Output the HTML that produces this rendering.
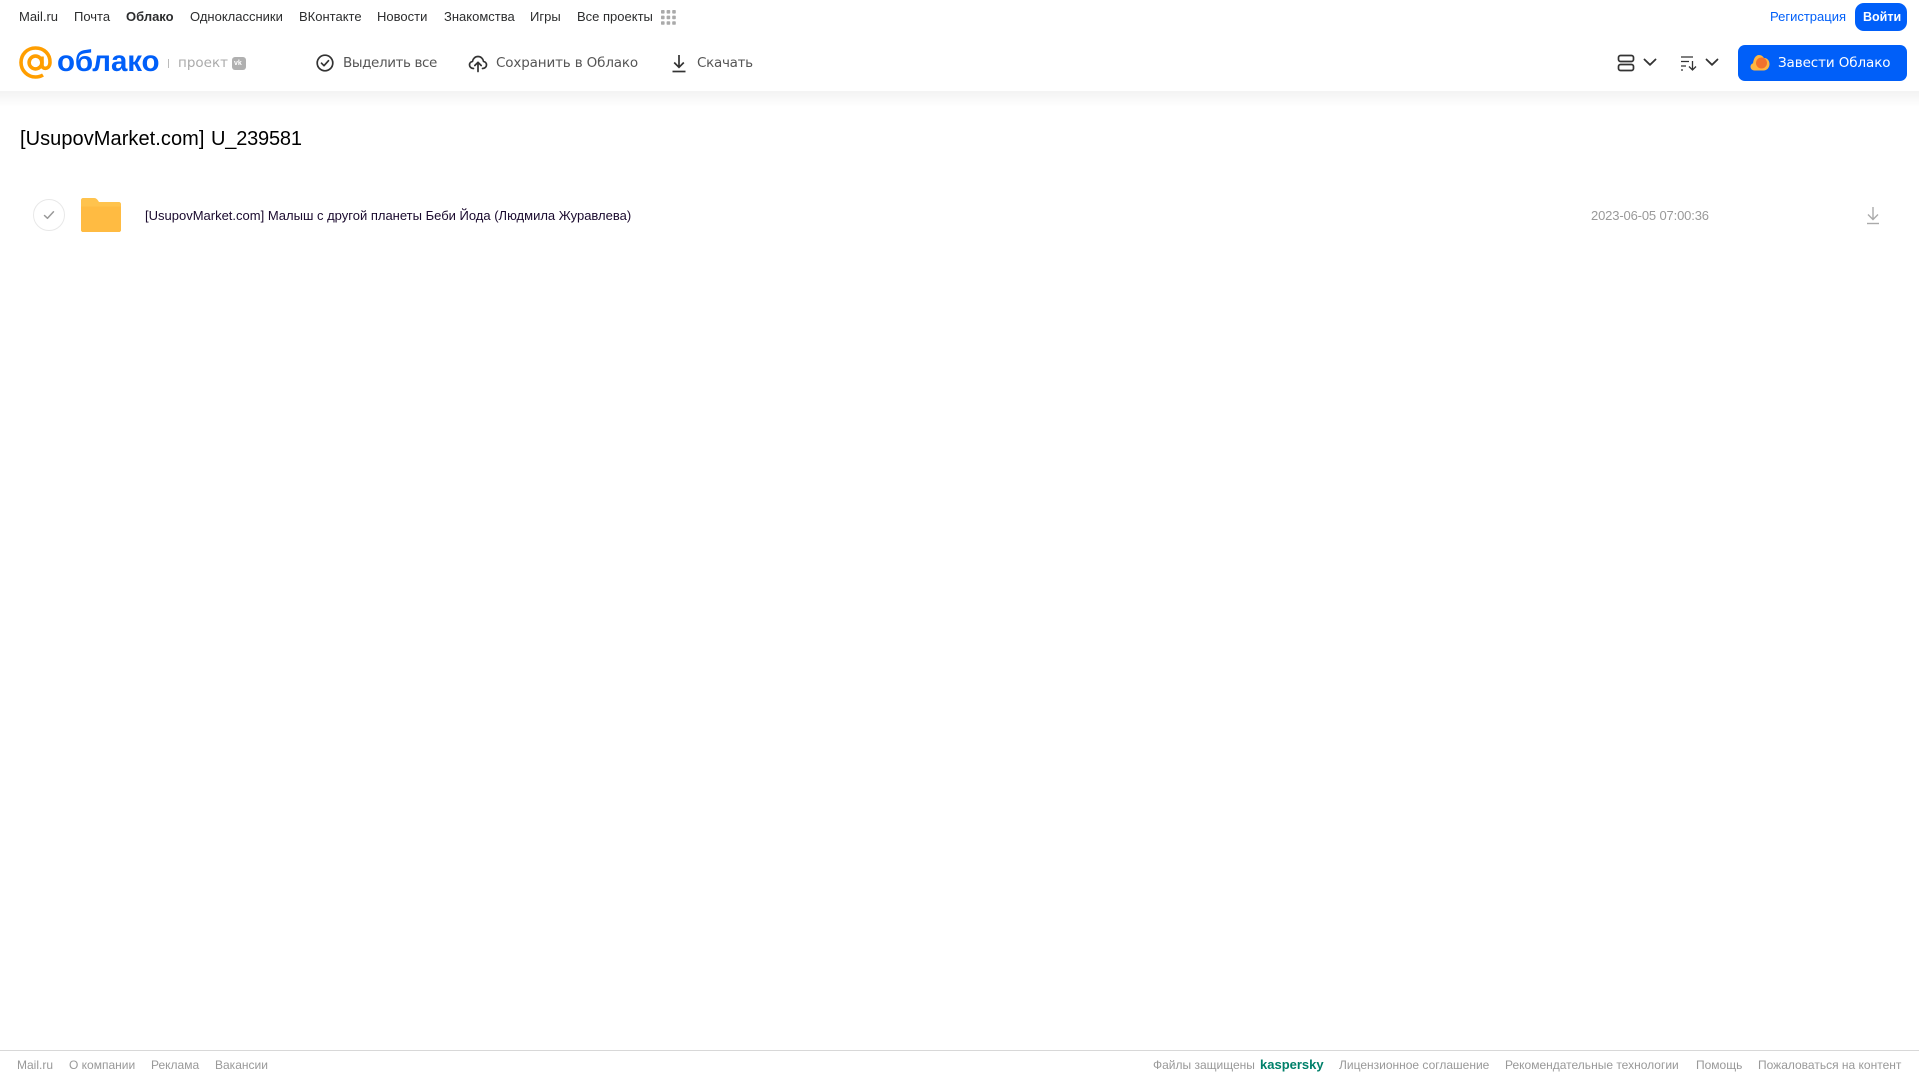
<!DOCTYPE html>
<html lang="ru">
<head>
<meta charset="utf-8">
<title>Облако</title>
<style>
html,body{margin:0;padding:0;background:#fff}
body{width:1919px;height:1079px;position:relative;overflow:hidden;font-family:"Liberation Sans",sans-serif}
.t{position:absolute;white-space:nowrap;line-height:20px}
.n{top:7px;font-size:13px;color:#2c2d2e}
.m{top:53px;color:#555;font-family:"DejaVu Sans",sans-serif;font-size:13.5px}
.f{top:1055px;font-size:12px;color:#999}
svg{position:absolute;display:block}
</style>
</head>
<body>
<div style="position:absolute;left:0;top:91px;width:1919px;height:16px;background:linear-gradient(#f3f3f3,#fff)"></div>
<div style="position:absolute;left:0;top:0;width:1919px;height:91px;background:#fff"></div>

<span class="t n" style="left:19px">Mail.ru</span>
<span class="t n" style="left:74px">Почта</span>
<span class="t n" style="left:126px;font-weight:bold">Облако</span>
<span class="t n" style="left:190px">Одноклассники</span>
<span class="t n" style="left:299px">ВКонтакте</span>
<span class="t n" style="left:377px">Новости</span>
<span class="t n" style="left:444px">Знакомства</span>
<span class="t n" style="left:530px">Игры</span>
<span class="t n" style="left:577px">Все проекты</span>
<svg style="left:661px;top:10px" width="15" height="15" viewBox="0 0 15 15" fill="#aaa">
<rect x="0" y="0" width="3.6" height="3.6" rx=".8"/><rect x="5.6" y="0" width="3.6" height="3.6" rx=".8"/><rect x="11.2" y="0" width="3.6" height="3.6" rx=".8"/>
<rect x="0" y="5.6" width="3.6" height="3.6" rx=".8"/><rect x="5.6" y="5.6" width="3.6" height="3.6" rx=".8"/><rect x="11.2" y="5.6" width="3.6" height="3.6" rx=".8"/>
<rect x="0" y="11.2" width="3.6" height="3.6" rx=".8"/><rect x="5.6" y="11.2" width="3.6" height="3.6" rx=".8"/><rect x="11.2" y="11.2" width="3.6" height="3.6" rx=".8"/>
</svg>

<span class="t" style="left:1770px;top:7px;font-size:13px;color:#005ff9">Регистрация</span>
<div style="position:absolute;left:1855px;top:3px;width:52px;height:28px;border-radius:9px;background:#005ff9"></div>
<span class="t" style="left:1863px;top:7px;font-size:12.5px;font-weight:bold;color:#fff">Войти</span>

<svg style="left:19px;top:46px" width="34" height="34" viewBox="0 0 34 34" fill="none" stroke="#ff9e00" stroke-width="3.6">
<circle cx="16.5" cy="16.5" r="6.4"/>
<path d="M23 10.5v8.5c0 5 7.8 4.6 8-2.5C31.3 8 25 2 16.5 2S2 8.500 2 16.500 8.500 31 16.500 31c3 0 5.500-.8 7.500-2"/>
</svg>
<span class="t" style="left:57px;top:46px;font-size:29.5px;line-height:32px;font-weight:bold;color:#005ff9;font-family:'Liberation Sans',sans-serif;letter-spacing:-.1px">облако</span>
<div style="position:absolute;left:168px;top:59px;width:1px;height:9px;background:#bbb"></div>
<span class="t" style="left:178px;top:53px;font-size:13.5px;color:#aaa;font-family:'DejaVu Sans',sans-serif">проект</span>
<div style="position:absolute;left:232px;top:57px;width:14px;height:13px;border-radius:3px;background:#b0b0b0"></div>
<span class="t" style="left:234px;top:57px;font-size:7px;line-height:13px;font-weight:bold;color:#fff">vk</span>

<svg style="left:315px;top:53px" width="20" height="20" viewBox="0 0 20 20" fill="none" stroke="#333" stroke-width="1.7">
<circle cx="10" cy="10" r="7.8"/><path d="M6.500 10.200l2.500 2.500 4.500-5" stroke-linecap="round" stroke-linejoin="round"/>
</svg>
<span class="t m" style="left:343px;letter-spacing:-.4px">Выделить все</span>

<svg style="left:468px;top:53px" width="20" height="20" viewBox="0 0 20 20" fill="none" stroke="#333" stroke-width="1.7" stroke-linecap="round" stroke-linejoin="round">
<path d="M5.500 15.500C3 15.500 1.500 13.800 1.500 11.900c0-1.800 1.300-3.200 3-3.500C5 5.500 7.200 3.500 10 3.500s5 2 5.500 4.900c1.700.3 3 1.700 3 3.500 0 1.900-1.500 3.600-4 3.600"/>
<path d="M10 18.500V9.500M6.800 12.500L10 9.300l3.200 3.200"/>
</svg>
<span class="t m" style="left:496px;letter-spacing:-.15px">Сохранить в Облако</span>

<svg style="left:670px;top:53px" width="18" height="20" viewBox="0 0 18 20" fill="none" stroke="#333" stroke-width="1.7">
<path d="M9 2v12M4.200 9.500L9 14.300l4.800-4.800"/><path d="M2.500 18.500h13"/>
</svg>
<span class="t m" style="left:697px;letter-spacing:-.3px">Скачать</span>

<svg style="left:1617px;top:54px" width="18" height="18" viewBox="0 0 18 18" fill="none" stroke="#333" stroke-width="1.7">
<rect x="1.500" y="1.500" width="15" height="6" rx="2"/><rect x="1.500" y="10.500" width="15" height="6" rx="2"/>
</svg>
<svg style="left:1643px;top:58px" width="14" height="9" viewBox="0 0 14 9" fill="none" stroke="#333" stroke-width="1.8" stroke-linecap="round" stroke-linejoin="round"><path d="M1.500 1.500L7 6.800l5.500-5.300"/></svg>
<svg style="left:1680px;top:55px" width="18" height="16" viewBox="0 0 18 16" fill="none" stroke="#333" stroke-width="1.300">
<path d="M1 2h12M1 6.500h8M1 11h5M1 15h2"/><path d="M12.500 6v9M9 11.500l3.500 3.500 3.500-3.500"/>
</svg>
<svg style="left:1705px;top:58px" width="14" height="9" viewBox="0 0 14 9" fill="none" stroke="#333" stroke-width="1.8" stroke-linecap="round" stroke-linejoin="round"><path d="M1.500 1.500L7 6.800l5.500-5.300"/></svg>

<div style="position:absolute;left:1738px;top:45px;width:169px;height:36px;border-radius:7px;background:#005ff9"></div>
<svg style="left:1750px;top:54px" width="20" height="17" viewBox="0 0 20 17">
<path d="M4.500 16.500C2 16.500 .5 14.800 .5 12.800c0-1.800 1.200-3 2.500-3.500C3.500 5 5.500 1 9 1c2.500 0 4 1.500 5 3 3-.2 5.500 2.500 5.500 6s-2.500 6.500-6 6.500z" fill="#ffb640"/>
<circle cx="11.500" cy="9" r="5.500" fill="#f2722c"/>
</svg>
<span class="t" style="left:1778px;top:53px;font-size:13.5px;color:#fff;font-family:'DejaVu Sans',sans-serif;letter-spacing:-.1px">Завести Облако</span>

<span class="t" style="left:20px;top:127px;font-size:20px;line-height:24px;color:#000"><span style="letter-spacing:.06px">[UsupovMarket.com]</span> <span style="letter-spacing:-.2px;margin-left:1px">U_239581</span></span>

<div style="position:absolute;left:33px;top:199px;width:30px;height:30px;border:1px solid #e8e8e8;border-radius:50%"></div>
<svg style="left:42px;top:209px" width="14" height="12" viewBox="0 0 14 12" fill="none" stroke="#999" stroke-width="1.500" stroke-linecap="round" stroke-linejoin="round"><path d="M2.500 6.500l3 2.800 6-6.500"/></svg>
<svg style="left:81px;top:198px" width="40" height="34" viewBox="0 0 40 34">
<path d="M2 0h11c2 0 3 1 4 2.500L18 4h20c1.100 0 2 .9 2 2v26c0 1.100-.9 2-2 2H2c-1.100 0-2-.9-2-2V2C0 .9.900 0 2 0z" fill="#ffc34d"/>
<path d="M0 8.500h40V32c0 1.100-.9 2-2 2H2c-1.100 0-2-.9-2-2z" fill="#ffbb42"/>
</svg>
<span class="t" style="left:145px;top:206px;font-size:13px;color:#1a0a2e">[UsupovMarket.com] Малыш с другой планеты Беби Йода (Людмила Журавлева)</span>
<span class="t" style="left:1591px;top:206px;font-size:13px;color:#999;letter-spacing:-.15px">2023-06-05 07:00:36</span>
<svg style="left:1865px;top:206px" width="16" height="19" viewBox="0 0 16 19" fill="none" stroke="#aaa" stroke-width="1.400">
<path d="M8 1v12M3 8.500L8 13.500l5-5"/><path d="M2 17.500h12"/>
</svg>

<div style="position:absolute;left:0;top:1050px;width:1919px;height:1px;background:#d8d8d8"></div>
<span class="t f" style="left:17px">Mail.ru</span>
<span class="t f" style="left:69px">О компании</span>
<span class="t f" style="left:151px">Реклама</span>
<span class="t f" style="left:215px">Вакансии</span>
<span class="t f" style="left:1153px">Файлы защищены</span>
<span class="t f" style="left:1260px;font-size:13px;font-weight:bold;color:#00806a">kaspersky</span>
<span class="t f" style="left:1339px">Лицензионное соглашение</span>
<span class="t f" style="left:1505px">Рекомендательные технологии</span>
<span class="t f" style="left:1696px">Помощь</span>
<span class="t f" style="left:1758px">Пожаловаться на контент</span>
</body>
</html>
